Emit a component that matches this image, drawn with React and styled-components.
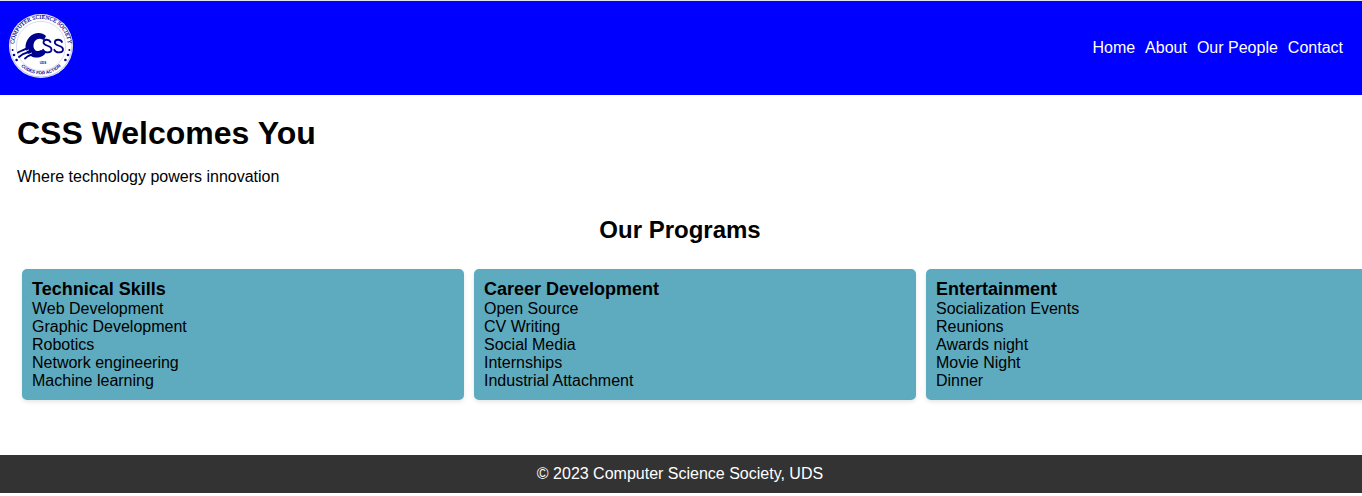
import React from 'react';
import styled, { createGlobalStyle } from 'styled-components';

const GlobalStyle = createGlobalStyle`
  * { box-sizing: border-box; margin: 0; padding: 0; }
  body {
    font-family: Arial, "Liberation Sans", sans-serif;
    font-size: 16px;
    line-height: 18px;
    color: #000;
    background: #fff;
    overflow-x: hidden;
  }
`;

const Header = styled.header`
  display: flex;
  justify-content: space-between;
  align-items: center;
  height: 95px;
  padding: 0 19px 0 8px;
  border-top: 1px solid #dfe3ea;
  background: #0000ff;
`;

const LogoLink = styled.a`
  display: block;
  width: 66px;
  height: 66px;
  margin-bottom: 4px;
`;

const NavList = styled.ul`
  display: flex;
  gap: 10px;
  list-style: none;
`;

const NavLink = styled.a`
  color: #fff;
  text-decoration: none;
`;

const Welcome = styled.section`
  padding: 20px 17px 0;
`;

const PageTitle = styled.h1`
  font-size: 32px;
  line-height: 36px;
  margin-bottom: 17px;
`;

const Programs = styled.section`
  padding: 30px 19px 55px 17px;
`;

const SectionTitle = styled.h2`
  font-size: 24px;
  line-height: 28px;
  text-align: center;
  margin-bottom: 25px;
`;

const CardRow = styled.div`
  display: flex;
`;

const Card = styled.article`
  flex: 0 0 calc(100% / 3);
  margin: 0 5px;
  padding: 10px;
  border-radius: 5px;
  background: #5eaabe;
  box-shadow: 0 2px 4px rgba(0, 0, 0, 0.1);
`;

const CardTitle = styled.h3`
  font-size: 18px;
  line-height: 21px;
`;

const CardList = styled.ul`
  list-style: none;
`;

const Footer = styled.footer`
  padding: 10px 2px 10px 0;
  text-align: center;
  color: #fff;
  background: #333;
`;

const links = ['Home', 'About', 'Our People', 'Contact'];

const programs = [
  {
    title: 'Technical Skills',
    items: ['Web Development', 'Graphic Development', 'Robotics', 'Network engineering', 'Machine learning'],
  },
  {
    title: 'Career Development',
    items: ['Open Source', 'CV Writing', 'Social Media', 'Internships', 'Industrial Attachment'],
  },
  {
    title: 'Entertainment',
    items: ['Socialization Events', 'Reunions', 'Awards night', 'Movie Night', 'Dinner'],
  },
];

function Logo() {
  const navy = '#00008f';
  return (
    <svg viewBox="0 0 66 66" width="66" height="66" role="img" aria-label="Computer Science Society">
      <defs>
        <path id="ring-top" d="M10.6 48 A27 27 0 1 1 55.4 48" />
        <path id="ring-bottom" d="M6.5 43 A28.3 28.3 0 0 0 59.5 43" />
      </defs>
      <circle cx="33" cy="33" r="32" fill="#fff" />
      <circle cx="33" cy="33" r="31" fill="none" stroke="#5a5ac0" strokeWidth="0.4" />
      <circle cx="33" cy="33" r="24.6" fill="none" stroke="#b4b4dc" strokeWidth="0.5" />
      <g fill={navy} textAnchor="middle">
        <text fontSize="5.6" fontFamily="'Liberation Serif', serif" stroke={navy} strokeWidth="0.15">
          <textPath href="#ring-top" startOffset="50%">COMPUTER SCIENCE SOCIETY</textPath>
        </text>
        <text fontSize="4.4" fontWeight="700" fontFamily="'Liberation Sans', sans-serif">
          <textPath href="#ring-bottom" startOffset="50%">CODES FOR ACTION</textPath>
        </text>
        <text x="35" y="50.5" fontSize="3" fontWeight="700" fontFamily="'Liberation Sans', sans-serif">UDS</text>
      </g>
      <path
        d="M38 23 C34 18.5 26 19 21.5 24 C17 29 16.5 35 19 39 C22 45 31 47 37 41 L37.5 38 L33 37 C29 39.5 25.5 37 25.5 33 C25.5 28 29 25 33 26 L36 27 Z"
        fill={navy}
      />
      <path d="M10 39.5 L14 37.5 L20 35 M11 44 L15 41 L22 38.5 M17 45.5 L20 43 L25 41" stroke={navy} strokeWidth="1.9" fill="none" strokeLinecap="round" />
      <path d="M13 40 L21 36.8 M16 43.2 L24 39.9" stroke="#fff" strokeWidth="0.8" />
      <g fill="none" stroke={navy} strokeWidth="1.8" strokeLinecap="round">
        <path d="M42.5 29 C41 25.8 35.5 26 35.5 29.5 C35.5 33.5 43.5 32 43.5 36.2 C43.5 40.3 36.5 40.3 35 36.8" />
        <path d="M54 29 C52.5 25.8 46.8 26 46.8 29.5 C46.8 33.5 55 32 55 36.2 C55 40.3 47.8 40.3 46.3 36.8" />
      </g>
      <g fill={navy}>
        <circle cx="4.6" cy="37" r="1" />
        <circle cx="6" cy="42" r="1.3" />
        <circle cx="8.6" cy="47" r="1.3" />
        <circle cx="61.4" cy="37" r="1" />
        <circle cx="60" cy="42" r="1.3" />
        <circle cx="57.4" cy="47" r="1.3" />
      </g>
    </svg>
  );
}

export default function App() {
  return (
    <>
      <GlobalStyle />
      <Header>
        <LogoLink href="#home"><Logo /></LogoLink>
        <nav>
          <NavList>
            {links.map((label) => (
              <li key={label}><NavLink href="#">{label}</NavLink></li>
            ))}
          </NavList>
        </nav>
      </Header>
      <main>
        <Welcome>
          <PageTitle>CSS Welcomes You</PageTitle>
          <p>Where technology powers innovation</p>
        </Welcome>
        <Programs>
          <SectionTitle>Our Programs</SectionTitle>
          <CardRow>
            {programs.map(({ title, items }) => (
              <Card key={title}>
                <CardTitle>{title}</CardTitle>
                <CardList>
                  {items.map((item) => <li key={item}>{item}</li>)}
                </CardList>
              </Card>
            ))}
          </CardRow>
        </Programs>
      </main>
      <Footer><p>© 2023 Computer Science Society, UDS</p></Footer>
    </>
  );
}
